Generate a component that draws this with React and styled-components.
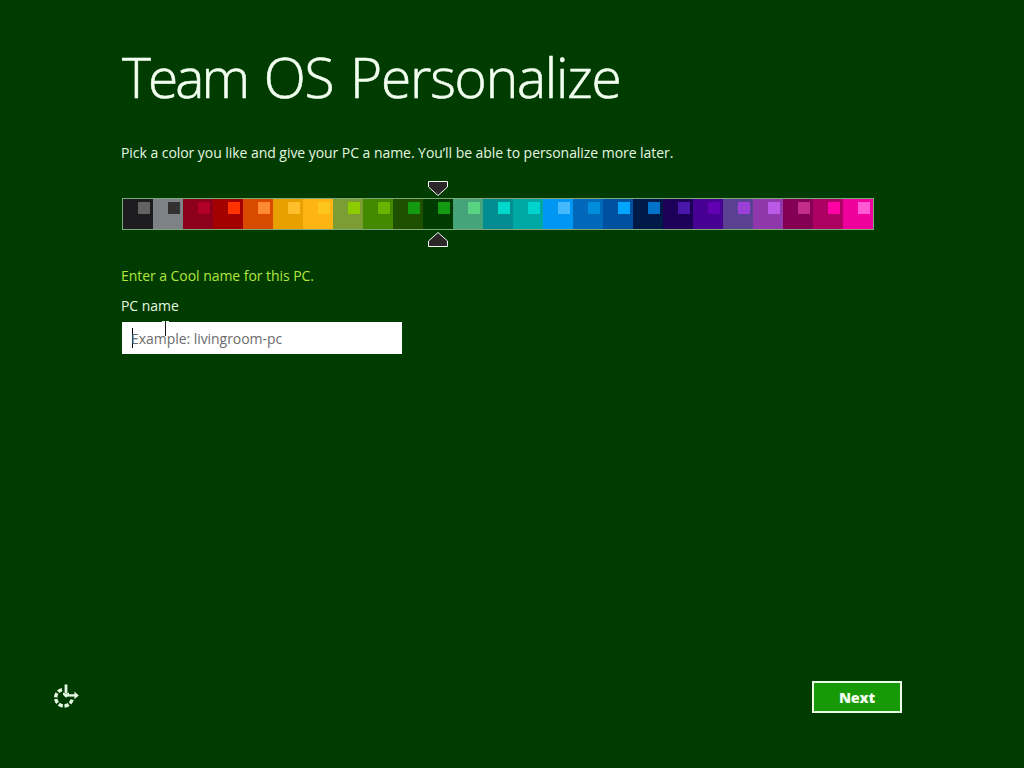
import styled, { createGlobalStyle } from 'styled-components';

const swatches = [
	['#1d1d1f', '#626262'],
	['#7c8285', '#323232'],
	['#8c001c', '#b20028'],
	['#a40000', '#ff3200'],
	['#d84a00', '#ff8a32'],
	['#e8a000', '#ffbe2a'],
	['#ffb414', '#ffc61e'],
	['#7c9c34', '#8ccc00'],
	['#448a00', '#6ab400'],
	['#1e5000', '#149a10'],
	['#003c00', '#149a10'],
	['#46a47a', '#5ad284'],
	['#008c90', '#00d8cc'],
	['#00a8a4', '#00d4cc'],
	['#0096f4', '#46baff'],
	['#0068b8', '#008cdc'],
	['#0050a0', '#00a6ff'],
	['#001a48', '#0072c8'],
	['#1c0058', '#4818a8'],
	['#460092', '#6200b4'],
	['#5a4090', '#9c3ed8'],
	['#8e38ac', '#bc5ae8'],
	['#840054', '#c42c8c'],
	['#ac0062', '#ff00a4'],
	['#ee009c', '#ff5ad4'],
];

const SELECTED = 10;

export default function App() {
	return (
		<>
			<GlobalStyle />
			<Screen>
				<Title>
					<Tight>Team</Tight> OS Personalize
				</Title>
				<Intro>
					Pick a color you like and give your PC a name. You’ll be able to personalize more later.
				</Intro>
				<Picker>
					<Marker viewBox='0 0 20 15'>
						<path d='M.5.5h19v5.5L10 14.5.5 6z' />
					</Marker>
					<Strip>
						{swatches.map(([base, accent], i) => (
							<Swatch key={i} $base={base} $accent={accent} />
						))}
					</Strip>
					<Marker viewBox='0 0 20 15'>
						<path d='M.5 14.5h19V9L10 .5.5 9z' />
					</Marker>
				</Picker>
				<Hint>Enter a Cool name for this PC.</Hint>
				<Label>PC name</Label>
				<Field>
					<Caret />
					<Placeholder>Example: livingroom-pc</Placeholder>
					<Pointer viewBox='0 0 7 16'>
						<path d='M0 .5h3M4 .5h3' stroke='#e8f5e8' />
						<path d='M3.5 1v14' stroke='#111' />
					</Pointer>
				</Field>
				<Footer>
					<EaseIcon viewBox='0 0 26 26'>
						<path
							d='M9 5.6A8.3 8.3 0 1 0 19.2 14.8'
							strokeWidth='3.4'
							strokeDasharray='4.4 1.7'
						/>
						<path d='M13 .5v9' strokeWidth='2.8' />
						<path d='M13 11.4h9' strokeWidth='2.4' />
						<path className='head' d='M10 8.4l3 1.4 3-1.4v2.4l-3 3-3-3zM21.4 7.6l4.4 3.8-4.4 3.8z' />
					</EaseIcon>
					<NextButton>Next</NextButton>
				</Footer>
			</Screen>
		</>
	);
}

const GlobalStyle = createGlobalStyle`
	* {
		box-sizing: border-box;
	}
	body {
		margin: 0;
		background: #003c00;
		font-family: 'Open Sans', 'Noto Sans', sans-serif;
	}
`;

const Screen = styled.main`
	display: flex;
	flex-direction: column;
	width: 1024px;
	height: 768px;
	padding: 39px 122px 55px;
	overflow: hidden;
	color: #e6f7e2;
	white-space: nowrap;
`;

const Title = styled.h1`
	margin: 0;
	height: 76px;
	font-size: 55px;
	font-weight: 300;
	line-height: 76px;
	letter-spacing: -1.2px;
	word-spacing: 3.5px;
	color: #f2fff0;
	-webkit-text-stroke: 0.6px #f2fff0;
`;

const Tight = styled.span`
	letter-spacing: -2.9px;
`;

const Intro = styled.p`
	margin: 27px 0 0 -1px;
	height: 22px;
	font-size: 14px;
	line-height: 22px;
	letter-spacing: -0.05px;
`;

const Picker = styled.div`
	display: flex;
	flex-direction: column;
	gap: 2px;
	width: 752px;
	margin-top: 17px;
`;

const Marker = styled.svg`
	width: 20px;
	height: 15px;
	margin-left: ${SELECTED * 30 + 6}px;
	fill: #2b2729;
	stroke: #f4fff4;
`;

const Strip = styled.div`
	display: flex;
	height: 32px;
	border: 1px solid #7fa878;
`;

const Swatch = styled.div`
	display: flex;
	justify-content: flex-end;
	width: 30px;
	padding: 3px 3px 0 0;
	background: ${({ $base }) => $base};
	&::after {
		content: '';
		width: 12px;
		height: 12px;
		background: ${({ $accent }) => $accent};
	}
`;

const Hint = styled.p`
	margin: 18px 0 0 -1px;
	height: 22px;
	font-size: 14px;
	line-height: 22px;
	letter-spacing: -0.05px;
	color: #b4e63c;
`;

const Label = styled.label`
	margin: 8px 0 0 -1px;
	height: 22px;
	font-size: 14px;
	line-height: 22px;
	letter-spacing: -0.05px;
`;

const Field = styled.div`
	position: relative;
	display: flex;
	align-items: center;
	width: 280px;
	height: 32px;
	margin-top: 5px;
	padding-left: 10px;
	background: #fff;
`;

const Caret = styled.span`
	width: 1px;
	height: 20px;
	margin-right: -2px;
	background: #000;
`;

const Placeholder = styled.span`
	padding-top: 2px;
	font-size: 14px;
	line-height: 22px;
	letter-spacing: -0.05px;
	color: #6c6c6c;
`;

/* text cursor hovering over the field */
const Pointer = styled.svg`
	position: absolute;
	left: 40px;
	top: -1px;
	width: 7px;
	height: 16px;
	fill: none;
`;

const Footer = styled.footer`
	display: flex;
	align-items: center;
	justify-content: space-between;
	margin: auto 0 0 -69px;
`;

const EaseIcon = styled.svg`
	width: 26px;
	height: 26px;
	fill: none;
	stroke: #e6f7e2;
	.head {
		fill: #e6f7e2;
		stroke: none;
	}
`;

const NextButton = styled.button`
	width: 90px;
	height: 32px;
	padding: 1px 0 0;
	border: 2px solid #eaffe6;
	background: #179a05;
	color: #f4fff2;
	font: 800 14.5px/26px 'Open Sans', sans-serif;
	letter-spacing: -0.2px;
`;
